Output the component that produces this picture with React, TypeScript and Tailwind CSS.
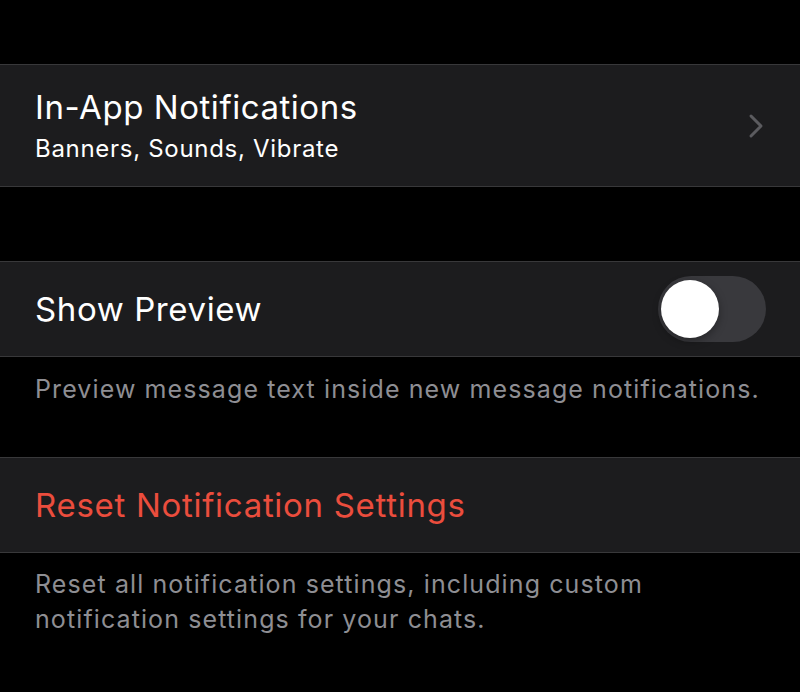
import React from 'react';

const font = { fontFamily: 'Inter, "Noto Sans", sans-serif' };

function Chevron() {
  return (
    <svg width="16" height="26" viewBox="0 0 16 26" fill="none">
      <path d="M3 3l10 10-10 10" stroke="#5b5b5f" strokeWidth="3" strokeLinecap="round" strokeLinejoin="round" />
    </svg>
  );
}

function Toggle() {
  return (
    <div className="flex h-[66px] w-[108px] items-center rounded-full bg-[#39393d] pl-[3px]">
      <div className="h-[58px] w-[58px] rounded-full bg-white shadow-[0_3px_8px_rgba(0,0,0,0.35)]" />
    </div>
  );
}

export default function App() {
  return (
    <div className="h-[692px] w-[800px] overflow-hidden bg-black pt-[64px] text-white" style={font}>
      <div className="flex h-[123px] items-center justify-between border-y border-[#38383a] bg-[#1c1c1e] pl-[35px] pr-[36px]">
        <div className="flex flex-col">
          <span className="text-[33px] leading-[40px] tracking-[0.55px]">In-App Notifications</span>
          <span className="mt-[7px] text-[24px] leading-[30px] tracking-[0.7px]">Banners, Sounds, Vibrate</span>
        </div>
        <Chevron />
      </div>

      <div className="h-[74px]" />

      <div className="flex h-[96px] items-center justify-between border-y border-[#38383a] bg-[#1c1c1e] pl-[35px] pr-[34px]">
        <span className="text-[33px] leading-[40px] tracking-[0.6px]">Show Preview</span>
        <Toggle />
      </div>
      <div className="h-[100px] pl-[35px] pt-[15px]">
        <p className="whitespace-nowrap text-[25px] leading-[35px] tracking-[1.1px] text-[#8e8e93]">Preview message text inside new message notifications.</p>
      </div>

      <div className="flex h-[96px] items-center border-y border-[#38383a] bg-[#1c1c1e] pl-[35px]">
        <span className="text-[33px] leading-[40px] tracking-[0.7px] text-[#eb4d3d]">Reset Notification Settings</span>
      </div>
      <div className="pl-[35px] pt-[14px]">
        <p className="whitespace-nowrap text-[25px] leading-[35px] tracking-[1.1px] text-[#8e8e93]">
          Reset all notification settings, including custom
          <br />
          notification settings for your chats.
        </p>
      </div>
    </div>
  );
}
